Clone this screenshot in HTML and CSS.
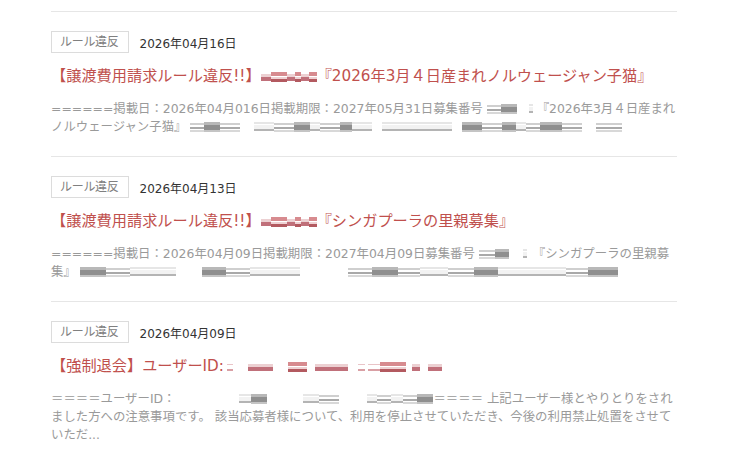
FILE: index.html
```html
<!DOCTYPE html>
<html lang="ja">
<head>
<meta charset="utf-8">
<link rel="stylesheet" href="styles.css">
</head>
<body>
<div class="list">
  <article class="item">
    <div class="meta"><span class="tag">ルール違反</span><span class="date">2026年04月16日</span></div>
    <h2 class="title">【譲渡費用請求ルール違反!!】<span class="mz p w10"></span><span class="mz p2 w16"></span><span class="mz p w8"></span><span class="mz p2 w6"></span><span class="mz p w8"></span><span class="mz p2 w8"></span>『2026年3月４日産まれノルウェージャン子猫』</h2>
    <p class="desc">======掲載日：2026年04月016日掲載期限：2027年05月31日募集番号 <span class="mz l w14"></span><span class="mz d w16"></span><span class="gap w12"></span><span class="mz u w4"></span><span class="gap w4"></span>『2026年3月４日産まれノルウェージャン子猫』 <span class="mz l w14"></span><span class="mz d w16"></span><span class="mz l w20"></span><span class="gap w14"></span><span class="mz u w20"></span><span class="mz l w20"></span><span class="mz d w16"></span><span class="mz u w10"></span><span class="mz l w20"></span><span class="mz d w12"></span><span class="mz u w20"></span><span class="gap w10"></span><span class="mz u w70"></span><span class="gap w10"></span><span class="mz d w20"></span><span class="mz l w20"></span><span class="mz d w14"></span><span class="mz u w10"></span><span class="mz l w14"></span><span class="mz d w22"></span><span class="mz l w20"></span><span class="gap w14"></span><span class="mz l w26"></span></p>
  </article>
  <article class="item">
    <div class="meta"><span class="tag">ルール違反</span><span class="date">2026年04月13日</span></div>
    <h2 class="title">【譲渡費用請求ルール違反!!】<span class="mz p w10"></span><span class="mz p2 w16"></span><span class="mz p w8"></span><span class="mz p2 w6"></span><span class="mz p w8"></span><span class="mz p2 w8"></span>『シンガプーラの里親募集』</h2>
    <p class="desc">======掲載日：2026年04月09日掲載期限：2027年04月09日募集番号 <span class="mz l w16"></span><span class="mz d w14"></span><span class="gap w14"></span><span class="mz u w4"></span><span class="gap w6"></span>『シンガプーラの里親募集』 <span class="mz d w26"></span><span class="mz l w24"></span><span class="mz u w24"></span><span class="mz u w22"></span><span class="gap w26"></span><span class="mz d w24"></span><span class="mz l w24"></span><span class="mz u w24"></span><span class="mz u w26"></span><span class="gap w48"></span><span class="mz l w24"></span><span class="mz d w26"></span><span class="mz l w22"></span><span class="mz u w28"></span><span class="mz l w26"></span><span class="mz d w24"></span><span class="mz u w24"></span><span class="mz u w24"></span><span class="mz u w20"></span><span class="mz l w22"></span><span class="mz d w30"></span></p>
  </article>
  <article class="item">
    <div class="meta"><span class="tag">ルール違反</span><span class="date">2026年04月09日</span></div>
    <h2 class="title">【強制退会】ユーザーID:<span class="gap w3"></span><span class="mz pl w6"></span><span class="gap w15"></span><span class="mz p w25"></span><span class="gap w15"></span><span class="mz p2 w19"></span><span class="gap w8"></span><span class="mz p w33"></span><span class="gap w10"></span><span class="mz pl w7"></span><span class="gap w3"></span><span class="mz pl w12"></span><span class="mz p2 w26"></span><span class="gap w6"></span><span class="mz p w8"></span><span class="gap w8"></span><span class="mz p w14"></span></h2>
    <p class="desc">＝＝＝＝ユーザーID：<span class="gap w64"></span><span class="mz u w12"></span><span class="mz d w16"></span><span class="gap w36"></span><span class="mz u w16"></span><span class="mz l w20"></span><span class="gap w28"></span><span class="mz u w10"></span><span class="mz l w14"></span><span class="mz u w12"></span><span class="mz l w14"></span><span class="mz d w16"></span>＝＝＝＝ 上記ユーザー様とやりとりをされました方への注意事項です。 該当応募者様について、利用を停止させていただき、今後の利用禁止処置をさせていただ...</p>
  </article>
</div>
</body>
</html>
```
FILE: styles.css
```css
html, body {
  margin: 0;
  padding: 0;
  background: #ffffff;
}
body {
  font-family: "DejaVu Sans", "Noto Sans CJK JP", sans-serif;
  color: #333;
}
.list {
  width: 626px;
  margin: 11px 0 0 51px;
  border-top: 1px solid #e6e6e6;
}
.item {
  padding: 19px 0 20px;
  border-bottom: 1px solid #e6e6e6;
}
.meta {
  display: flex;
  align-items: center;
  gap: 11px;
  height: 22px;
}
.tag {
  box-sizing: border-box;
  height: 22px;
  line-height: 20px;
  padding: 0 9px 0 8px;
  border: 1px solid #dcdcdc;
  font-size: 12px;
  color: #808080;
  letter-spacing: -0.3px;
}
.date {
  font-size: 12px;
  color: #333;
}
.title {
  margin: 11px 0 0;
  font-size: 15.2px;
  font-weight: normal;
  line-height: 24px;
  color: #c0504d;
  white-space: nowrap;
}
.desc {
  margin: 12px 0 0;
  font-size: 12.4px;
  line-height: 18px;
  color: #9a9a9a;
}
.mz {
  display: inline-block;
  height: 10px;
  vertical-align: -1px;
}
.gap {
  display: inline-block;
  height: 1px;
}
.mz.l {
  background:
    linear-gradient(#cfcfcf, #cfcfcf) 0 1px / 100% 2px no-repeat,
    linear-gradient(#a9a9a9, #a9a9a9) 0 5px / 100% 2px no-repeat,
    linear-gradient(#d8d8d8, #d8d8d8) 0 8px / 100% 2px no-repeat;
}
.mz.d {
  background:
    linear-gradient(#b8b8b8, #b8b8b8) 0 0 / 100% 3px no-repeat,
    linear-gradient(#8f8f8f, #8f8f8f) 0 3px / 100% 5px no-repeat,
    linear-gradient(#c4c4c4, #c4c4c4) 0 8px / 100% 2px no-repeat;
}
.mz.u {
  background:
    linear-gradient(#e6e6e6, #e6e6e6) 0 0 / 100% 2px no-repeat,
    linear-gradient(#f2f2f2, #f2f2f2) 0 3px / 100% 4px no-repeat,
    linear-gradient(#b4b4b4, #b4b4b4) 0 7px / 100% 2px no-repeat;
}
.mz.p {
  background:
    linear-gradient(#ecd0d2, #ecd0d2) 0 2px / 100% 3px no-repeat,
    linear-gradient(#c0707a, #c0707a) 0 5px / 100% 4px no-repeat;
}
.mz.pl {
  background:
    linear-gradient(#e9c4c7, #e9c4c7) 0 2px / 100% 1px no-repeat,
    linear-gradient(#d9a0a5, #d9a0a5) 0 7px / 100% 2px no-repeat;
}
.mz.p2 {
  background:
    linear-gradient(#d78b8f, #d78b8f) 0 0 / 100% 4px no-repeat,
    linear-gradient(#efd2d4, #efd2d4) 0 5px / 100% 2px no-repeat,
    linear-gradient(#b35a60, #b35a60) 0 7px / 100% 3px no-repeat;
}
.w3 { width: 3px; }
.w4 { width: 4px; }
.w6 { width: 6px; }
.w7 { width: 7px; }
.w8 { width: 8px; }
.w10 { width: 10px; }
.w12 { width: 12px; }
.w14 { width: 14px; }
.w15 { width: 15px; }
.w16 { width: 16px; }
.w19 { width: 19px; }
.w20 { width: 20px; }
.w22 { width: 22px; }
.w24 { width: 24px; }
.w25 { width: 25px; }
.w26 { width: 26px; }
.w28 { width: 28px; }
.w30 { width: 30px; }
.w33 { width: 33px; }
.w36 { width: 36px; }
.w48 { width: 48px; }
.w64 { width: 64px; }
.w70 { width: 70px; }
```
